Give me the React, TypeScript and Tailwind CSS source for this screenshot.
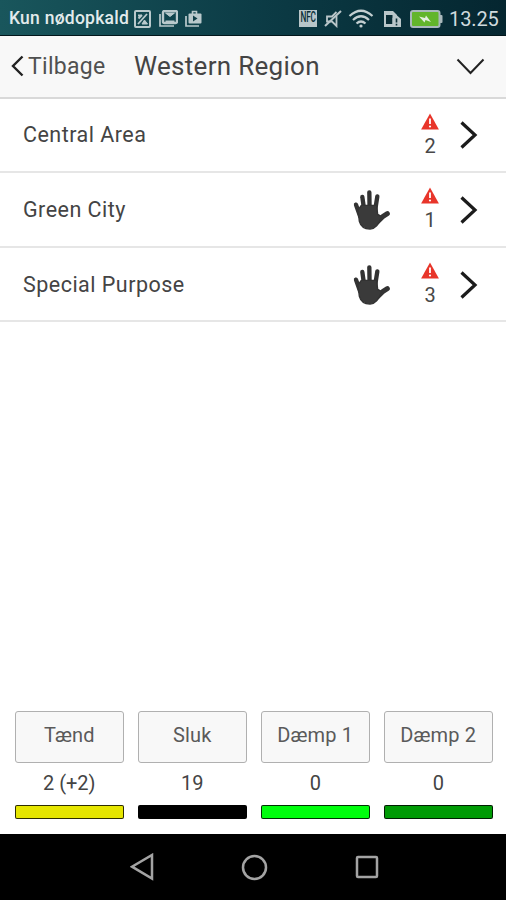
const regions = [
  { name: "Central Area", manual: false, alerts: 2 },
  { name: "Green City", manual: true, alerts: 1 },
  { name: "Special Purpose", manual: true, alerts: 3 },
];

const actions = [
  { label: "Tænd", count: "2 (+2)", bar: "bg-[#e6e600]" },
  { label: "Sluk", count: "19", bar: "bg-black" },
  { label: "Dæmp 1", count: "0", bar: "bg-[#00ff0d]" },
  { label: "Dæmp 2", count: "0", bar: "bg-[#009b05]" },
];

function Hand() {
  return (
    <svg width="40" height="44" viewBox="36 264 120 132" fill="none" stroke="#333" strokeLinecap="round" strokeLinejoin="round">
      <path d="M48 314L60 348" strokeWidth="13" />
      <path d="M67 291L74 340" strokeWidth="13" />
      <path d="M88 277L89 340" strokeWidth="13" />
      <path d="M112 289L104 340" strokeWidth="13" />
      <path d="M142 341L128 350L112 366" strokeWidth="15" />
      <path d="M54 330L64 316H110L113 343L124 349Q114 386 90 387Q64 387 58 364Z" fill="#3a3a3a" strokeWidth="4" />
    </svg>
  );
}

function Warning() {
  return (
    <svg width="18" height="17" viewBox="0 0 18 17">
      <path d="M9 .5L17.9 16.5H.1Z" fill="#e8352a" />
      <path d="M9 5.5V11" stroke="#fff" strokeWidth="1.8" />
      <circle cx="9" cy="13.5" r="1.1" fill="#fff" />
    </svg>
  );
}

function StatusBar() {
  return (
    <div className="flex h-9 shrink-0 items-center border-b border-[#02161b] bg-linear-to-r from-[#19565c] via-[#0c3c46] to-[#052630] pt-0.5 pr-2 pl-[9px] text-[#d0dadd]">
      <span className="w-[121px] whitespace-nowrap text-[17.5px] font-medium tracking-[0.25px] text-[#e2ebec]">Kun nødopkald</span>
      <svg className="ml-1" width="17" height="18" viewBox="0 0 17 18" fill="none" stroke="#b9c9cc">
        <rect x="1" y="1" width="15" height="16" rx="1" strokeWidth="2" />
        <path d="M4 14L13 4" strokeWidth="1.8" />
        <path d="M4 5.500h4M4.500 8.500L8 5" strokeWidth="2" />
        <path d="M8 14l2.500-4 3 4z" fill="#b9c9cc" strokeWidth="1" />
      </svg>
      <svg className="ml-2" width="19" height="17" viewBox="0 0 19 17" fill="none" stroke="#b9c9cc">
        <path d="M1 4v12h14" strokeWidth="1.7" />
        <rect x="4" y="1" width="14" height="12" rx="1.5" strokeWidth="2.4" />
        <path d="M6.500 3l4.500 3.500L15.500 3z" fill="#b9c9cc" strokeWidth="1" />
        <path d="M6.500 11.500h9" strokeWidth="2" />
      </svg>
      <svg className="ml-[7px]" width="17" height="17" viewBox="0 0 17 17">
        <path d="M1 6v10h13" fill="none" stroke="#b9c9cc" strokeWidth="1.7" />
        <path d="M7.5 4V1.5h4V4" fill="none" stroke="#b9c9cc" strokeWidth="1.6" />
        <rect x="3.5" y="3.5" width="13" height="10" rx="1" fill="#b9c9cc" />
        <path d="M8 5.5v6l4.5-3z" fill="#103f48" />
      </svg>
      <div className="ml-auto flex h-[17px] w-[18px] items-center justify-center bg-[#b9c6c9]">
        <span className="scale-x-75 scale-y-125 text-[11px] font-medium tracking-tight text-[#0a2f38]">NFC</span>
      </div>
      <svg className="ml-[7px]" width="18" height="19" viewBox="0 0 18 19" fill="none" stroke="#b9c6c9">
        <path d="M12.500 7v10L8 12.500H3v-5h5L12.500 3" strokeWidth="1.8" />
        <path d="M1 17L17 2" strokeWidth="2" />
      </svg>
      <svg className="ml-[6px]" width="26" height="19" viewBox="0 0 26 19" fill="none" stroke="#c3cfd1" strokeWidth="2.2">
        <path d="M1.5 7Q13-3.5 24.5 7M5 11Q13 3.500 21 11M8.500 14.500Q13 10.500 17.500 14.500" />
        <circle cx="13" cy="17" r="1.6" fill="#c3cfd1" stroke="none" />
      </svg>
      <svg className="ml-[9px]" width="19" height="18" viewBox="0 0 19 18">
        <path d="M1 1h9l4 4v12H1z" fill="#b9c6c9" />
        <path d="M3 5h6.500v9H3z" fill="#092c35" />
        <path d="M9.500 8L13.500 5L18 9v8H9.500z" fill="#b9c6c9" />
        <path d="M13.500 8.500v4M13.500 13.800v1.800" stroke="#092c35" strokeWidth="1.6" />
      </svg>
      <svg className="ml-2" width="33" height="18" viewBox="0 0 33 18">
        <rect x="29" y="5" width="3.500" height="8" rx="1" fill="#a9b8bb" />
        <rect x="1" y="1" width="28.500" height="16" rx="2" fill="#62b52b" stroke="#a9b8bb" strokeWidth="2" />
        <path d="M9 6.500l6 1.500 1-2.500 5 6.500-5.500-2-1 2.500z" fill="#e4efdf" />
      </svg>
      <span className="ml-1.5 w-[49px] whitespace-nowrap text-[20px] tracking-[-0.1px]">13.25</span>
    </div>
  );
}

export default function App() {
  return (
    <div className="flex h-[900px] w-[506px] flex-col overflow-hidden bg-white font-[Roboto,sans-serif] text-[#444]">
      <StatusBar />
      <header className="flex h-[62.500px] shrink-0 items-center border-b-2 border-[#d9d9d9] bg-[#f8f8f8] pr-[21px] pl-[11px]">
        <svg width="13" height="22" viewBox="0 0 13 22" fill="none" stroke="#222" strokeWidth="2.4">
          <path d="M11.500 1.500L2 11l9.500 9.500" />
        </svg>
        <span className="ml-1 w-[78px] whitespace-nowrap pt-px text-[23px] tracking-[0.3px] text-[#505050]">Tilbage</span>
        <h1 className="ml-7 whitespace-nowrap text-[26px] tracking-[0.3px]">Western Region</h1>
        <svg className="ml-auto" width="29" height="17" viewBox="0 0 29 17" fill="none" stroke="#222" strokeWidth="2">
          <path d="M1.500 1.500L14.500 15L27.500 1.500" />
        </svg>
      </header>

      <main className="flex-1">
        {regions.map((region) => (
          <div key={region.name} className="flex h-[74.667px] items-center border-b-2 border-[#e6e6e6] pt-px pr-7 pl-[23px]">
            <span className="text-[21.5px] tracking-[0.48px]">{region.name}</span>
            <div className="ml-auto flex items-center">
              {region.manual && <Hand />}
              <div className="ml-7 flex w-[20px] flex-col items-center">
                <Warning />
                <span className="mt-1 text-[20px] leading-6 text-[#484848]">{region.alerts}</span>
              </div>
              <svg className="ml-[19px]" width="19" height="28" viewBox="0 0 18 28" fill="none" stroke="#1c1c1c" strokeWidth="3.2">
                <path d="M2 1.500L15.500 14L2 26.500" />
              </svg>
            </div>
          </div>
        ))}
      </main>

      <footer className="grid grid-cols-4 gap-[13.500px] pr-[13px] pb-[15px] pl-[14.500px]">
        {actions.map((action) => (
          <div key={action.label} className="flex flex-col text-center">
            <button className="h-[52px] rounded-[3px] border border-[#b0b0b0] bg-[#f8f8f8] pb-1 text-[20px] tracking-[0.15px] text-[#5a5a5a]">
              {action.label}
            </button>
            <span className="h-[41.500px] pt-[6px] text-[20px] leading-[29px]">{action.count}</span>
            <div className={`h-[14.500px] rounded-[2px] border border-black/80 ${action.bar}`} />
          </div>
        ))}
      </footer>

      <nav className="flex h-[66px] shrink-0 items-center bg-black pl-[130px]">
        <svg width="24" height="28" viewBox="0 0 24 28" fill="none" stroke="#a3a3a3" strokeWidth="2.500">
          <path d="M22 2v23.500L2 13.700z" />
        </svg>
        <svg className="ml-[87px]" width="27" height="27" viewBox="0 0 27 27" fill="none" stroke="#a3a3a3" strokeWidth="2.500">
          <circle cx="13.500" cy="13.500" r="11.500" />
        </svg>
        <svg className="ml-[87px]" width="24" height="24" viewBox="0 0 24 24" fill="none" stroke="#a3a3a3" strokeWidth="2.500">
          <rect x="2" y="2" width="20" height="20" rx="1" />
        </svg>
      </nav>
    </div>
  );
}
